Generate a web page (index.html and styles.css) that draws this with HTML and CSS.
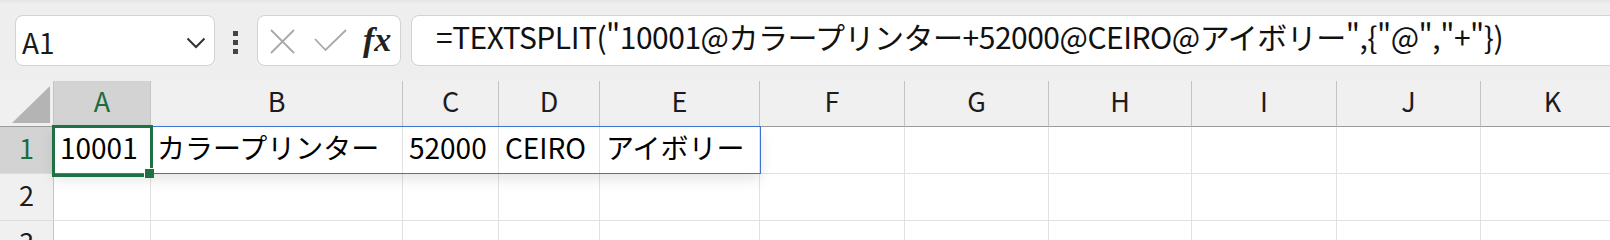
FILE: index.html
```html
<!DOCTYPE html>
<html lang="ja">
<head>
    <meta charset="UTF-8">
    <title>TEXTSPLIT</title>
    <link rel="stylesheet" href="styles.css">
</head>
<body>
    <div class="toolbar">
        <div class="name-box">
            <span class="name">A1</span>
            <svg class="chevron" width="20" height="12" viewBox="0 0 20 12">
                <polyline points="1.5,1.5 10,10 18.5,1.5" fill="none" stroke="#333" stroke-width="2"/>
            </svg>
        </div>
        <div class="grip"><i></i><i></i><i></i></div>
        <div class="fx-box">
            <svg class="icon-x" width="25" height="25" viewBox="0 0 25 25">
                <line x1="1" y1="1" x2="24" y2="24" stroke="#a8a8a8" stroke-width="1.8"/>
                <line x1="24" y1="1" x2="1" y2="24" stroke="#a8a8a8" stroke-width="1.8"/>
            </svg>
            <svg class="icon-check" width="33" height="23" viewBox="0 0 33 23">
                <polyline points="1,10 11.5,21 32,1" fill="none" stroke="#a8a8a8" stroke-width="1.8"/>
            </svg>
            <span class="fx">fx</span>
        </div>
        <div class="formula">=TEXTSPLIT("10001@カラープリンター+52000@CEIRO@アイボリー",{"@","+"})</div>
    </div>

    <div class="sheet">
        <div class="grid">
            <!-- header row -->
            <div class="corner"><span class="tri"></span></div>
            <div class="col-head active">A</div>
            <div class="col-head">B</div>
            <div class="col-head">C</div>
            <div class="col-head">D</div>
            <div class="col-head">E</div>
            <div class="col-head">F</div>
            <div class="col-head">G</div>
            <div class="col-head">H</div>
            <div class="col-head">I</div>
            <div class="col-head">J</div>
            <div class="col-head">K</div>

            <!-- row 1 -->
            <div class="row-head active">1</div>
            <div class="cell">10001</div>
            <div class="cell">カラープリンター</div>
            <div class="cell">52000</div>
            <div class="cell">CEIRO</div>
            <div class="cell">アイボリー</div>
            <div class="cell"></div>
            <div class="cell"></div>
            <div class="cell"></div>
            <div class="cell"></div>
            <div class="cell"></div>
            <div class="cell"></div>

            <!-- row 2 -->
            <div class="row-head">2</div>
            <div class="cell"></div>
            <div class="cell"></div>
            <div class="cell"></div>
            <div class="cell"></div>
            <div class="cell"></div>
            <div class="cell"></div>
            <div class="cell"></div>
            <div class="cell"></div>
            <div class="cell"></div>
            <div class="cell"></div>
            <div class="cell"></div>

            <!-- row 3 -->
            <div class="row-head">3</div>
            <div class="cell"></div>
            <div class="cell"></div>
            <div class="cell"></div>
            <div class="cell"></div>
            <div class="cell"></div>
            <div class="cell"></div>
            <div class="cell"></div>
            <div class="cell"></div>
            <div class="cell"></div>
            <div class="cell"></div>
            <div class="cell"></div>
        </div>
        <div class="spill"></div>
        <div class="selection"><span class="handle"></span></div>
    </div>
</body>
</html>
```

FILE: styles.css
```css
*{
    box-sizing: border-box;
}
body{
    margin: 0;
    width: 1610px;
    height: 240px;
    overflow: hidden;
    background-color: #eeeeee;
    font-family: "Noto Sans CJK JP", "Noto Sans", sans-serif;
    color: #111;
}

/* formula bar */
.toolbar{
    display: flex;
    align-items: flex-start;
    height: 81px;
    padding: 15px 0 0 15px;
    background: linear-gradient(#e4e4e4, #eeeeee 4px);
}
.name-box{
    display: flex;
    justify-content: space-between;
    width: 200px;
    height: 51px;
    padding: 6px 0 0 6px;
    background-color: white;
    border: 1px solid #d2d2d2;
    border-radius: 8px;
}
.name{
    font-size: 28px;
    line-height: 40px;
    color: #1a1a1a;
}
.chevron{
    margin: 15px 8px 0 0;
}
.grip{
    display: flex;
    flex-direction: column;
    gap: 4px;
    width: 6px;
    margin: 16px 18px 0 18px;
}
.grip i{
    display: block;
    width: 5px;
    height: 5px;
    background-color: #444;
}
.fx-box{
    display: flex;
    align-items: flex-start;
    width: 144px;
    height: 51px;
    padding: 13px 0 0 12px;
    background-color: white;
    border: 1px solid #d2d2d2;
    border-radius: 8px;
}
.icon-check{
    margin-left: 19px;
}
.fx{
    margin: -9px 0 0 16px;
    font-family: "Liberation Serif", serif;
    font-style: italic;
    font-weight: bold;
    font-size: 34px;
    line-height: 40px;
    color: #222;
}
.formula{
    flex: 1;
    height: 51px;
    margin: 0 -20px 0 10px;
    padding: 0 0 0 24px;
    background-color: white;
    border: 1px solid #d2d2d2;
    border-radius: 8px 0 0 8px;
    font-size: 30px;
    line-height: 40px;
    letter-spacing: -0.5px;
    white-space: nowrap;
    color: #111;
}

/* sheet */
.sheet{
    position: relative;
}
.grid{
    display: grid;
    grid-template-columns: 54px 97px 252px 96px 101px 160px 145px 144px 143px 145px 144px 144px;
    grid-template-rows: 46px 47px 47px 47px;
    width: 1625px;
    background-color: white;
}
.corner, .col-head{
    position: relative;
    background-color: #f0f0f0;
    border-right: 1px solid #c4c4c4;
    border-bottom: 1px solid #9c9c9c;
}
.tri{
    position: absolute;
    right: 3px;
    bottom: 3px;
    width: 38px;
    height: 37px;
    background-color: #b4b4b4;
    clip-path: polygon(100% 0, 100% 100%, 0 100%);
}
.col-head{
    text-align: center;
    font-size: 27px;
    line-height: 40px;
    color: #1c1c1c;
}
.row-head{
    background-color: #f0f0f0;
    border-right: 1px solid #c4c4c4;
    border-bottom: 1px solid #dcdcdc;
    text-align: center;
    font-size: 27px;
    line-height: 42px;
    color: #1c1c1c;
}
.col-head.active, .row-head.active{
    background-color: #d3d3d3;
    color: #1e6c41;
}
.cell{
    padding-left: 6px;
    border-right: 1px solid #e1e1e1;
    border-bottom: 1px solid #e1e1e1;
    font-size: 28px;
    line-height: 40px;
    white-space: nowrap;
    color: #000;
}

/* overlays */
.spill{
    position: absolute;
    left: 53px;
    top: 45px;
    width: 708px;
    height: 48px;
    border: 1px solid #3c73cc;
    box-shadow: 0 6px 12px rgba(0, 0, 0, 0.10);
}
.selection{
    position: absolute;
    left: 52px;
    top: 44px;
    width: 101px;
    height: 52px;
    border: 3px solid #1f7145;
}
.handle{
    position: absolute;
    right: -4px;
    bottom: -4px;
    width: 10px;
    height: 10px;
    background-color: #1f7145;
    border-left: 1px solid white;
    border-top: 1px solid white;
}
```
